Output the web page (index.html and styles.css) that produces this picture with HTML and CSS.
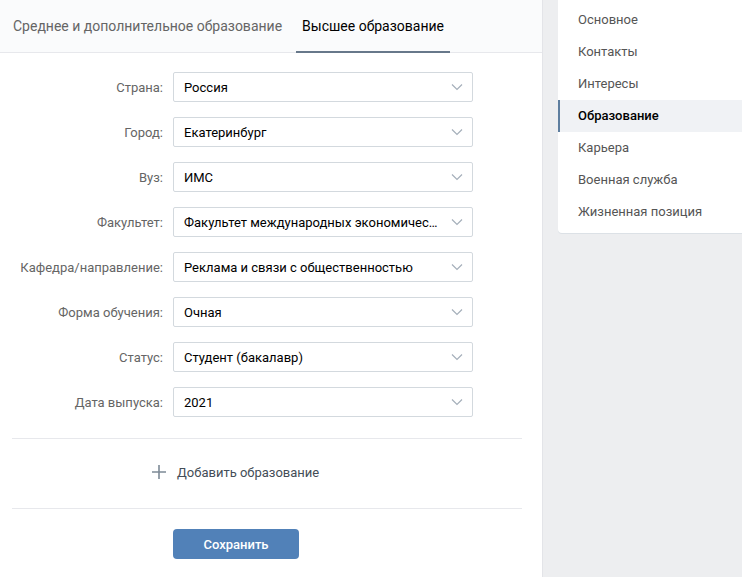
FILE: index.html
```html
<html>
  <head>
    <title>Редактирование страницы</title>
    <link rel="stylesheet" href="styles.css">
  </head>

  <body>
    <div class="page">
      <div class="main-card">
        <div class="tabs">
          <div class="tab">Среднее и дополнительное образование</div>
          <div class="tab tab-active">Высшее образование</div>
        </div>

        <div class="form">
          <div class="row">
            <div class="label">Страна:</div>
            <div class="select"><span class="value">Россия</span><svg class="chevron" width="12" height="8" viewBox="0 0 12 8"><path d="M1 1.5l5 5 5-5" /></svg></div>
          </div>
          <div class="row">
            <div class="label">Город:</div>
            <div class="select"><span class="value">Екатеринбург</span><svg class="chevron" width="12" height="8" viewBox="0 0 12 8"><path d="M1 1.5l5 5 5-5" /></svg></div>
          </div>
          <div class="row">
            <div class="label">Вуз:</div>
            <div class="select"><span class="value">ИМС</span><svg class="chevron" width="12" height="8" viewBox="0 0 12 8"><path d="M1 1.5l5 5 5-5" /></svg></div>
          </div>
          <div class="row">
            <div class="label">Факультет:</div>
            <div class="select"><span class="value">Факультет международных экономических отношений</span><svg class="chevron" width="12" height="8" viewBox="0 0 12 8"><path d="M1 1.5l5 5 5-5" /></svg></div>
          </div>
          <div class="row">
            <div class="label">Кафедра/направление:</div>
            <div class="select"><span class="value">Реклама и связи с общественностью</span><svg class="chevron" width="12" height="8" viewBox="0 0 12 8"><path d="M1 1.5l5 5 5-5" /></svg></div>
          </div>
          <div class="row">
            <div class="label">Форма обучения:</div>
            <div class="select"><span class="value">Очная</span><svg class="chevron" width="12" height="8" viewBox="0 0 12 8"><path d="M1 1.5l5 5 5-5" /></svg></div>
          </div>
          <div class="row">
            <div class="label">Статус:</div>
            <div class="select"><span class="value">Студент (бакалавр)</span><svg class="chevron" width="12" height="8" viewBox="0 0 12 8"><path d="M1 1.5l5 5 5-5" /></svg></div>
          </div>
          <div class="row">
            <div class="label">Дата выпуска:</div>
            <div class="select"><span class="value">2021</span><svg class="chevron" width="12" height="8" viewBox="0 0 12 8"><path d="M1 1.5l5 5 5-5" /></svg></div>
          </div>
        </div>

        <div class="separator"></div>

        <div class="add-row">
          <svg class="plus" width="16" height="16" viewBox="0 0 16 16"><path d="M8 1v14M1 8h14" /></svg>
          <span>Добавить образование</span>
        </div>

        <div class="separator"></div>

        <div class="actions">
          <button class="save">Сохранить</button>
        </div>
      </div>

      <div class="side-card">
        <div class="side-item">Основное</div>
        <div class="side-item">Контакты</div>
        <div class="side-item">Интересы</div>
        <div class="side-item side-active">Образование</div>
        <div class="side-item">Карьера</div>
        <div class="side-item">Военная служба</div>
        <div class="side-item">Жизненная позиция</div>
      </div>
    </div>
  </body>
</html>
```

FILE: styles.css
```css
body {
  margin: 0;
  background: #edeef0;
  font-family: Roboto, "Open Sans", sans-serif;
  font-size: 13px;
  color: #000;
  overflow: hidden;
}

.page {
  display: flex;
  align-items: flex-start;
  gap: 15px;
}

/* main card */

.main-card {
  flex: none;
  width: 551px;
  margin-left: -8px;
  height: 620px;
  background: #fff;
  border-right: 1px solid #e3e4e8;
  box-sizing: border-box;
}

.tabs {
  display: flex;
  height: 53px;
  padding-left: 15px;
  background: #fafbfc;
  border-bottom: 1px solid #e7e8ec;
  box-sizing: border-box;
}

.tab {
  display: flex;
  align-items: center;
  padding: 0 6px;
  margin-right: 8px;
  font-size: 14px;
  color: #656565;
  border-bottom: 2px solid transparent;
  margin-bottom: -1px;
}

.tab-active {
  color: #000;
  border-bottom-color: #67788a;
}

.form {
  display: flex;
  flex-direction: column;
  gap: 15px;
  padding: 19px 0 21px;
}

.row {
  display: flex;
  align-items: center;
  gap: 10px;
}

.label {
  width: 171px;
  text-align: right;
  color: #656565;
}

.select {
  display: flex;
  align-items: center;
  width: 300px;
  height: 30px;
  padding: 0 9px 0 10px;
  border: 1px solid #d3d9de;
  border-radius: 2px;
  box-sizing: border-box;
}

.value {
  flex: 1;
  white-space: nowrap;
  overflow: hidden;
  text-overflow: ellipsis;
  color: #000;
}

.chevron {
  flex: none;
  margin-left: 10px;
}

.chevron path {
  fill: none;
  stroke: #a5afba;
  stroke-width: 1.2;
}

.separator {
  height: 1px;
  margin: 0 20px;
  background: #e7e8ec;
}

.add-row {
  display: flex;
  align-items: center;
  gap: 10px;
  height: 69px;
  padding: 0 0 3px 159px;
  box-sizing: border-box;
  color: #444d57;
}

.plus path {
  fill: none;
  stroke: #7d8a97;
  stroke-width: 1.6;
}

.actions {
  padding: 20px 0 0 181px;
}

.save {
  width: 126px;
  height: 30px;
  border: none;
  border-radius: 4px;
  background: #5181b8;
  color: #fff;
  font-family: Roboto, sans-serif;
  font-size: 13px;
  font-weight: 500;
}

/* side menu */

.side-card {
  flex: none;
  width: 200px;
  padding: 4px 0 5px;
  background: #fff;
  border-radius: 0 0 0 4px;
  box-shadow: 0 1px 0 #dce1e6;
}

.side-item {
  height: 32px;
  line-height: 32px;
  padding-left: 18px;
  color: #555;
  border-left: 2px solid transparent;
}

.side-active {
  background: #f0f2f5;
  border-left-color: #5e7e9f;
  color: #000;
  font-weight: 500;
}
```
